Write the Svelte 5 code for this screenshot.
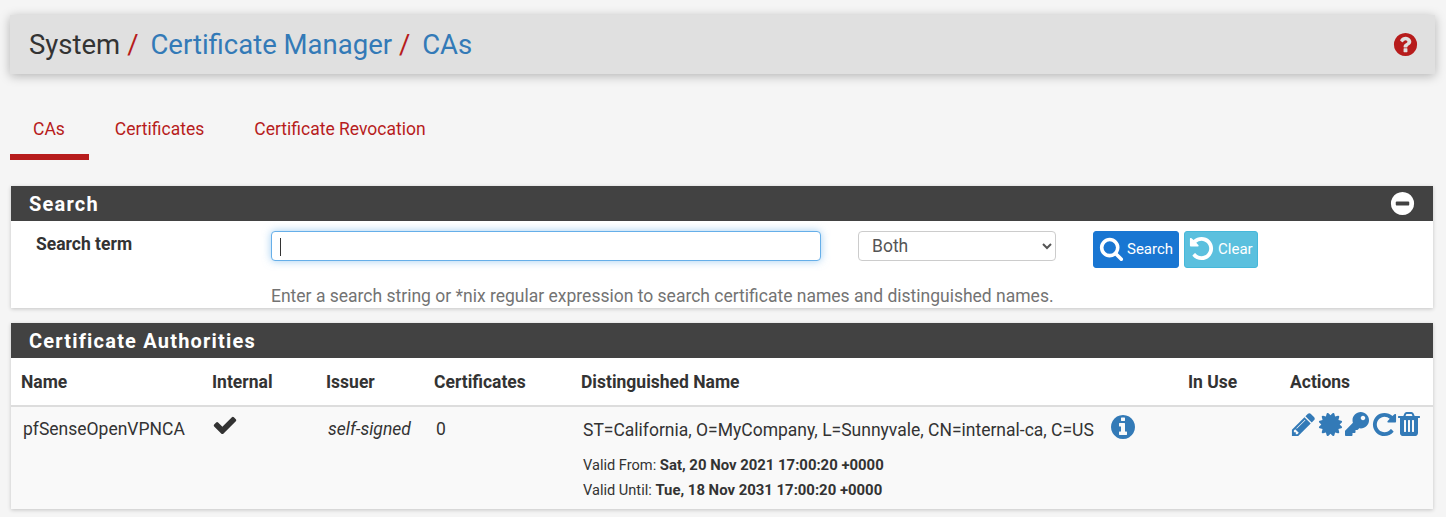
<script lang="ts">
	const columns = [
		{ label: 'Name', width: 191 },
		{ label: 'Internal', width: 114 },
		{ label: 'Issuer', width: 108 },
		{ label: 'Certificates', width: 147 },
		{ label: 'Distinguished Name', width: 607 },
		{ label: 'In Use', width: 102 },
		{ label: 'Actions', width: 153 }
	];

	const icons = {
		search: 'M1216 832q0-185-131.500-316.500t-316.500-131.500-316.500 131.500-131.500 316.500 131.500 316.500 316.500 131.500 316.500-131.500 131.500-316.500zm512 832q0 52-38 90t-90 38q-54 0-90-38l-343-342q-179 124-399 124-143 0-273.500-55.500t-225-150-150-225-55.500-273.500 55.500-273.500 150-225 225-150 273.500-55.500 273.500 55.500 225 150 150 225 55.500 273.500q0 220-124 399l343 343q37 37 37 90z',
		undo: 'M1664 896q0 156-61 298t-164 245-245 164-298 61q-172 0-327-72.500t-264-204.500q-7-10-6.500-22.500t8.500-20.500l137-138q10-9 25-9 16 2 23 12 73 95 179 147t225 52q104 0 198.500-40.500t163.500-109.500 109.500-163.500 40.500-198.500-40.500-198.500-109.500-163.500-163.500-109.500-198.500-40.500q-98 0-188 35.500t-160 101.500l137 138q31 30 14 69-17 40-59 40h-448q-26 0-45-19t-19-45v-448q0-42 40-59 39-17 69 14l130 129q107-101 244.500-156.500t284.500-55.500q156 0 298 61t245 164 164 245 61 298z',
		repeat: 'M1664 256v448q0 26-19 45t-45 19h-448q-42 0-59-40-17-39 14-69l138-138q-148-137-349-137-104 0-198.500 40.500t-163.500 109.500-109.500 163.500-40.500 198.500 40.500 198.500 109.500 163.500 163.500 109.500 198.500 40.500q119 0 225-52t179-147q7-10 23-12 15 0 25 9l137 138q9 8 9.500 20.500t-7.500 22.500q-109 132-264 204.500t-327 72.500q-156 0-298-61t-245-164-164-245-61-298 61-298 164-245 245-164 298-61q147 0 284.500 55.500t244.500 156.500l130-129q29-31 70-14 39 17 39 59z',
		check: 'M1671 566q0 40-28 68l-724 724-136 136q-28 28-68 28t-68-28l-136-136-362-362q-28-28-28-68t28-68l136-136q28-28 68-28t68 28l294 295 656-657q28-28 68-28t68 28l136 136q28 28 28 68z',
		info: 'M1152 1376v-160q0-14-9-23t-23-9h-96v-512q0-14-9-23t-23-9h-320q-14 0-23 9t-9 23v160q0 14 9 23t23 9h96v320h-96q-14 0-23 9t-9 23v160q0 14 9 23t23 9h448q14 0 23-9t9-23zm-128-896v-160q0-14-9-23t-23-9h-192q-14 0-23 9t-9 23v160q0 14 9 23t23 9h192q14 0 23-9t9-23zm640 416q0 209-103 385.500t-279.500 279.500-385.500 103-385.500-103-279.500-279.500-103-385.500 103-385.500 279.500-279.500 385.500-103 385.500 103 279.500 279.500 103 385.500z',
		question: 'M1024 1376v-192q0-14-9-23t-23-9h-192q-14 0-23 9t-9 23v192q0 14 9 23t23 9h192q14 0 23-9t9-23zm256-672q0-88-55.500-163t-138.500-116-170-41q-243 0-371 213-15 24 8 42l132 100q7 6 19 6 16 0 25-12 53-68 86-92 34-24 86-24 48 0 85.500 26t37.500 59q0 38-20 61t-68 45q-63 28-115.500 86.500t-52.500 125.500v36q0 14 9 23t23 9h192q14 0 23-9t9-23q0-19 21.500-49.500t54.500-49.500q32-18 49-28.500t46-35 44.500-48 28-60.500 12.500-81zm384 192q0 209-103 385.500t-279.500 279.500-385.500 103-385.500-103-279.500-279.500-103-385.500 103-385.500 279.500-279.500 385.500-103 385.500 103 279.500 279.500 103 385.500z',
		minus: 'M1344 960v-128q0-26-19-45t-45-19h-768q-26 0-45 19t-19 45v128q0 26 19 45t45 19h768q26 0 45-19t19-45zm320-64q0 209-103 385.500t-279.500 279.500-385.500 103-385.500-103-279.500-279.500-103-385.500 103-385.500 279.500-279.500 385.500-103 385.500 103 279.500 279.500 103 385.500z',
		pencil: 'M491 1536l91-91-235-235-91 91v107h128v128h107zm523-928q0-22-22-22-10 0-17 7l-542 542q-7 7-7 17 0 22 22 22 10 0 17-7l542-542q7-7 7-17zm-54-192l416 416-832 832h-416v-416zm683 96q0 53-37 90l-166 166-416-416 166-165q36-38 90-38 53 0 91 38l235 234q37 39 37 91z',
		certificate: 'M1504 896l138 135q30 28 20 70-12 41-52 51l-188 48 53 186q12 41-19 70-29 31-70 19l-186-53-48 188q-10 40-51 52-12 2-19 2-31 0-51-22l-135-138-135 138q-28 30-70 20-41-11-51-52l-48-188-186 53q-41 12-70-19-31-29-19-70l53-186-188-48q-40-10-52-51-10-42 20-70l138-135-138-135q-30-28-20-70 12-41 52-51l188-48-53-186q-12-41 19-70 29-31 70-19l186 53 48-188q10-41 51-51 41-12 70 19l135 139 135-139q29-30 70-19 41 10 51 51l48 188 186-53q41-12 70 19 31 29 19 70l-53 186 188 48q40 10 52 51 10 42-20 70z',
		trash: 'M704 1376v-704q0-14-9-23t-23-9h-64q-14 0-23 9t-9 23v704q0 14 9 23t23 9h64q14 0 23-9t9-23zm256 0v-704q0-14-9-23t-23-9h-64q-14 0-23 9t-9 23v704q0 14 9 23t23 9h64q14 0 23-9t9-23zm256 0v-704q0-14-9-23t-23-9h-64q-14 0-23 9t-9 23v704q0 14 9 23t23 9h64q14 0 23-9t9-23zm-544-992h448l-48-117q-7-9-17-11h-317q-10 2-17 11zm928 32v64q0 14-9 23t-23 9h-96v948q0 83-47 143.500t-113 60.500h-832q-66 0-113-58.500t-47-141.500v-952h-96q-14 0-23-9t-9-23v-64q0-14 9-23t23-9h309l70-167q15-37 54-63t79-26h320q40 0 79 26t54 63l70 167h309q14 0 23 9t9 23z'
	};
	const keyPath = 'M512 176.001C512 273.203 433.202 352 336 352c-11.220 0-22.190-1.062-32.827-3.069l-24.012 27.014A23.999 23.999 0 0 1 261.223 384H224v40c0 13.255-10.745 24-24 24h-40v40c0 13.255-10.745 24-24 24H24c-13.255 0-24-10.745-24-24v-78.059c0-6.365 2.529-12.470 7.029-16.971l161.802-161.802C163.108 213.814 160 195.271 160 176 160 78.798 238.797.001 335.999 0 433.488-.001 512 78.511 512 176.001zM336 128c0 26.510 21.490 48 48 48s48-21.490 48-48-21.490-48-48-48-48 21.490-48 48z';
</script>

{#snippet icon(d: string, size: number, cls: string)}
	<svg class={cls} width={size} height={size} viewBox="0 0 1792 1792" aria-hidden="true"><path {d} fill="currentColor" /></svg>
{/snippet}

<div class="page">
	<header class="crumbs">
		<h1>
			<span>System</span><i>/</i>
			<a href="#top">Certificate Manager</a><i>/</i>
			<a href="#top">CAs</a>
		</h1>
		{@render icon(icons.question, 27, 'help')}
	</header>

	<nav class="tabs">
		<a class="active" href="#top">CAs</a>
		<a href="#top">Certificates</a>
		<a href="#top">Certificate Revocation</a>
	</nav>

	<section class="panel">
		<div class="panel-head">
			<h2>Search</h2>
			{@render icon(icons.minus, 27, 'collapse')}
		</div>
		<div class="search">
			<span class="term">Search term</span>
			<div class="field">
				<div class="controls">
					<div class="input"><span class="caret"></span></div>
					<select class="select">
						<option>Both</option>
					</select>
					<div class="buttons">
						<button class="btn primary">{@render icon(icons.search, 25, '')}Search</button>
						<button class="btn info">{@render icon(icons.undo, 27, '')}Clear</button>
					</div>
				</div>
				<p>Enter a search string or *nix regular expression to search certificate names and distinguished names.</p>
			</div>
		</div>
	</section>

	<section class="panel">
		<div class="panel-head">
			<h2>Certificate Authorities</h2>
		</div>
		<table>
			<colgroup>
				{#each columns as col}
					<col style:width="{col.width}px" />
				{/each}
			</colgroup>
			<thead>
				<tr>
					{#each columns as col}
						<th>{col.label}</th>
					{/each}
				</tr>
			</thead>
			<tbody>
				<tr>
					<td>pfSenseOpenVPNCA</td>
					<td>{@render icon(icons.check, 26, 'check')}</td>
					<td><em>self-signed</em></td>
					<td>0</td>
					<td>
						<div class="dn">
							<span>ST=California, O=MyCompany, L=Sunnyvale, CN=internal-ca, C=US</span>
							{@render icon(icons.info, 28, 'link-icon')}
						</div>
						<small>Valid From: <b>Sat, 20 Nov 2021 17:00:20 +0000</b></small>
						<small>Valid Until: <b>Tue, 18 Nov 2031 17:00:20 +0000</b></small>
					</td>
					<td></td>
					<td class="actions-cell">
						<div class="actions">
							{@render icon(icons.pencil, 27, '')}
							{@render icon(icons.certificate, 27, '')}
							<svg class="key" width="24" height="24" viewBox="0 0 512 512" aria-hidden="true"><path d={keyPath} fill="currentColor" /></svg>
							{@render icon(icons.repeat, 27, '')}
							{@render icon(icons.trash, 28, 'trash')}
						</div>
					</td>
				</tr>
			</tbody>
		</table>
	</section>
</div>

<style>
	:global(body) {
		background: #f5f5f5;
		color: #333;
		font-family: Roboto, 'Liberation Sans', sans-serif;
	}

	.page {
		padding: 15px 10px 0;
	}

	.crumbs {
		display: flex;
		align-items: center;
		justify-content: space-between;
		height: 59px;
		margin-right: 1px;
		padding: 0 16px 0 19px;
		background: #e0e0e0;
		box-shadow: 0 2px 10px rgba(0, 0, 0, 0.27);
	}

	h1 {
		margin: 0;
		font-size: 27.5px;
		font-weight: 400;
		color: #333;
	}

	h1 i {
		font-style: normal;
		color: #b71c1c;
		margin: 0 5px 0 7px;
	}

	h1 a {
		color: #337ab7;
		text-decoration: none;
	}

	.help {
		color: #b71c1c;
	}

	.tabs {
		display: flex;
		gap: 3px;
		margin-top: 25px;
		margin-bottom: 26px;
	}

	.tabs a {
		padding: 20px 24px 14px 23px;
		font-size: 17.5px;
		line-height: 21px;
		color: #b71c1c;
		text-decoration: none;
		border-bottom: 6px solid transparent;
	}

	.tabs a.active {
		border-bottom-color: #b71c1c;
	}

	.panel {
		margin: 0 3px 15px 1px;
		background: #fff;
		box-shadow: 0 1px 4px rgba(0, 0, 0, 0.2);
	}

	.panel-head {
		display: flex;
		align-items: center;
		justify-content: space-between;
		height: 35px;
		padding: 0 17px 0 18px;
		background: #424242;
		color: #fff;
	}

	h2 {
		margin: 0;
		font-size: 20px;
		font-weight: 700;
		letter-spacing: 1.2px;
	}

	.search {
		display: flex;
		height: 87px;
	}

	.term {
		flex: 0 0 260px;
		padding: 13px 0 0 25px;
		box-sizing: border-box;
		font-size: 17.5px;
		font-weight: 700;
	}

	.controls {
		display: flex;
		align-items: flex-start;
		padding-top: 10px;
	}

	.input {
		width: 550px;
		height: 30px;
		box-sizing: border-box;
		padding: 6px 8px;
		background: #fff;
		border: 1px solid #66afe9;
		border-radius: 4px;
		box-shadow: 0 0 8px rgba(102, 175, 233, 0.6);
	}

	.caret {
		display: block;
		width: 1px;
		height: 18px;
		background: #333;
	}

	.select {
		width: 198px;
		height: 30px;
		margin-left: 37px;
		padding: 0 9px;
		background: #fff;
		border: 1px solid #ccc;
		border-radius: 4px;
		color: #555;
		font: 17.5px Roboto, 'Liberation Sans', sans-serif;
	}

	.buttons {
		display: flex;
		gap: 5px;
		margin-left: 37px;
	}

	.btn {
		display: flex;
		align-items: center;
		gap: 3px;
		height: 37px;
		padding: 0 5px 2px;
		border: 1px solid transparent;
		border-radius: 3px;
		color: #fff;
		font: 15px Roboto, 'Liberation Sans', sans-serif;
	}

	.primary {
		background: #1976d2;
		border-color: #1976d2;
	}

	.info {
		padding-left: 3px;
		padding-right: 4px;
		background: #5bc0de;
		border-color: #46b8da;
	}

	p {
		margin: 18px 0 0;
		font-size: 17.5px;
		line-height: 20px;
		color: #737373;
		white-space: nowrap;
	}

	table {
		width: 100%;
		table-layout: fixed;
		border-collapse: collapse;
		font-size: 17.5px;
	}

	th {
		height: 48px;
		padding: 0 10px;
		text-align: left;
		font-weight: 700;
		border-bottom: 2px solid #ddd;
		box-sizing: border-box;
	}

	td {
		height: 103px;
		padding: 12px 12px 0;
		vertical-align: top;
		background: #f9f9f9;
		box-sizing: border-box;
	}

	.check {
		display: block;
		margin: -7px 0 0 -2.5px;
		color: #333;
	}

	.dn {
		display: flex;
		align-items: flex-start;
		gap: 15px;
		margin: -6px 0 12px;
		white-space: nowrap;
	}

	.dn span {
		margin-top: 7px;
	}

	.link-icon {
		color: #337ab7;
	}

	small {
		display: block;
		font-size: 14.6px;
		line-height: 25px;
		white-space: nowrap;
	}

	small b {
		font-size: 14.9px;
	}

	.actions-cell {
		padding-left: 10px;
		padding-right: 0;
	}

	.actions {
		display: flex;
		align-items: center;
		margin-top: -9px;
		color: #337ab7;
	}

	.key {
		margin: 0 2px 0 1px;
	}

	.trash {
		margin-left: -3px;
	}
</style>
